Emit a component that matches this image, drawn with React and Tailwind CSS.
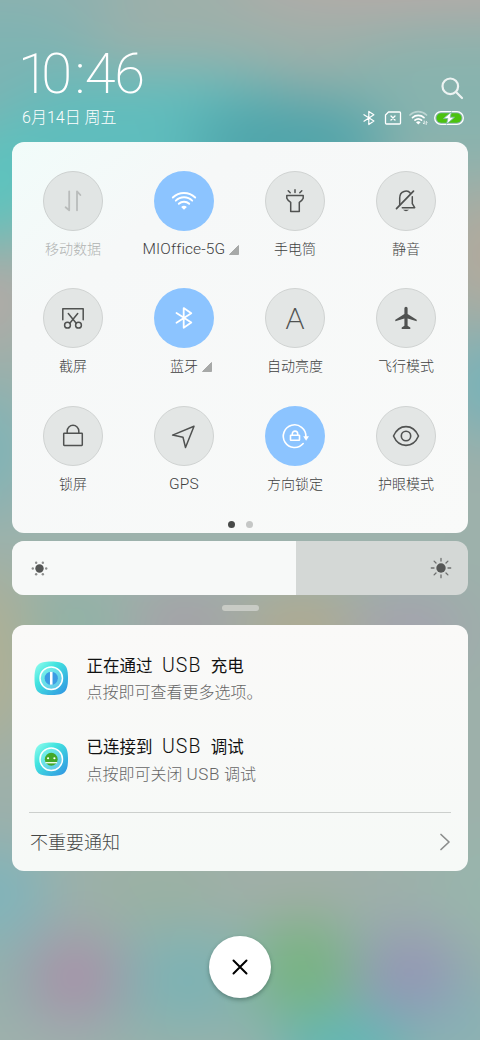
import React from 'react';

const icon = {
  fill: 'none',
  stroke: 'currentColor',
  strokeWidth: 1.5,
  strokeLinecap: 'round',
  strokeLinejoin: 'round'
};

// cx, cy, rx, ry, colour
const blobs = [
  [0, -10, 130, 60, '#8fb1af'],
  [430, -20, 200, 34, '#b8aaa7'],
  [0, 90, 110, 80, '#7db4b3'],
  [470, 100, 140, 70, '#88b3ae'],
  [170, 145, 180, 75, '#5fbdbd'],
  [290, 145, 100, 50, '#4fa4aa'],
  [-10, 190, 50, 60, '#5cc4be'],
  [-20, 295, 50, 45, '#b5a9a5'],
  [500, 255, 60, 60, '#b2a99c'],
  [500, 385, 60, 50, '#76b2b9'],
  [-20, 450, 55, 60, '#7fb4b7'],
  [240, 535, 300, 20, '#9cb4ae'],
  [-15, 660, 45, 90, '#b0b094'],
  [75, 622, 45, 22, '#86b4a2'],
  [185, 625, 50, 24, '#aa99a5'],
  [300, 625, 55, 26, '#b8a785'],
  [410, 630, 55, 24, '#a99bb0'],
  [-10, 895, 60, 50, '#7fb4bb'],
  [490, 890, 60, 60, '#98b5ac'],
  [170, 890, 80, 25, '#9ab1a0'],
  [290, 890, 80, 20, '#a6ada6'],
  [240, 985, 260, 60, '#8bb3ae'],
  [75, 978, 48, 42, '#aa8fa8'],
  [185, 978, 44, 34, '#78b2b6'],
  [303, 968, 46, 50, '#76b37d'],
  [410, 975, 48, 42, '#9593b6'],
  [345, 1050, 70, 36, '#5cb8b7'],
  [470, 1030, 50, 40, '#86b2b6'],
  [30, 1050, 90, 20, '#a2b1ae']
];

function Wallpaper() {
  return (
    <svg className="absolute inset-0" width="480" height="1040" viewBox="0 0 480 1040">
      <defs>
        <filter id="soften" x="-200" y="-200" width="880" height="1440" filterUnits="userSpaceOnUse" colorInterpolationFilters="sRGB">
          <feGaussianBlur stdDeviation="29" />
        </filter>
      </defs>
      <g filter="url(#soften)">
        <rect x="-150" y="-150" width="780" height="1340" fill="#9db0aa" />
        {blobs.map(([cx, cy, rx, ry, fill]) => (
          <ellipse key={`${cx}-${cy}`} cx={cx} cy={cy} rx={rx} ry={ry} fill={fill} />
        ))}
      </g>
    </svg>
  );
}

function DataIcon() {
  return (
    <svg width="30" height="30" viewBox="0 0 30 30" {...icon} strokeWidth="1.8">
      <path d="M11.2 5.3V24.3L7.6 21.3M19 24.3V5.3L22.4 9" />
    </svg>
  );
}

function WifiIcon() {
  return (
    <svg width="30" height="30" viewBox="0 0 30 30" {...icon} strokeWidth="1.9">
      <path d="M3.8 11.5A16 16 0 0 1 26.2 11.5M6.8 14.7A11.6 11.6 0 0 1 23.2 14.7M9.8 17.8A7.5 7.5 0 0 1 20.2 17.8" />
      <path d="M12.1 20.9Q15 18.7 17.9 20.9L15 23.7Z" fill="currentColor" stroke="none" />
    </svg>
  );
}

function TorchIcon() {
  return (
    <svg width="30" height="30" viewBox="0 0 30 30" {...icon}>
      <path d="M6.8 9.5H23.2V12.3Q22.5 14.3 19.3 16.3V25.5H10.7V16.3Q7.5 14.3 6.8 12.3Z" />
      <path d="M15 3.8V6.5M8.2 4.7L10.2 6.7M21.8 4.7L19.8 6.7" />
    </svg>
  );
}

function MuteIcon() {
  return (
    <svg width="30" height="30" viewBox="0 0 30 30" {...icon}>
      <path d="M8.7 18.7V12C8.7 4.5 16.6 3.6 19.4 7.2M21.3 10.7V17.7L23.7 21.7H11.3" />
      <path d="M5.5 22.7L22.5 5.2" strokeWidth="1.7" />
      <path d="M12 23.8H18Q15 26.7 12 23.8Z" fill="currentColor" stroke="none" />
    </svg>
  );
}

function ScissorsIcon() {
  return (
    <svg width="30" height="30" viewBox="0 0 30 30" {...icon}>
      <path d="M4.8 16.8V5.8H25.2V16.8" />
      <path d="M10.3 10.5L18.2 20.2M19.7 10.5L11.8 20.2" />
      <circle cx="9.5" cy="22.2" r="2.9" />
      <circle cx="20.5" cy="22.2" r="2.9" />
    </svg>
  );
}

function BluetoothIcon({ className = 'size-[30px]' }) {
  return (
    <svg className={className} viewBox="0 0 30 30" {...icon} strokeWidth="1.8">
      <path d="M7.5 10L22.3 19.6L14.7 24.8V5.1L22.3 10.3L7.5 19.8" />
    </svg>
  );
}

function PlaneIcon() {
  return (
    <svg width="30" height="30" viewBox="0 0 30 30" fill="currentColor">
      <path d="M13.4 5.3Q13.4 3.7 15 3.7T16.6 5.3V11L25.7 16.7V18.2L16.6 15.6V22.8L19.3 24.6V26H10.7V24.6L13.4 22.8V15.6L4.3 18.2V16.7L13.4 11Z" />
    </svg>
  );
}

function LockIcon() {
  return (
    <svg width="30" height="30" viewBox="0 0 30 30" {...icon}>
      <rect x="5.7" y="12.2" width="18.6" height="12.2" rx="0.6" />
      <path d="M9.2 12.2V10.1A5.8 5.8 0 0 1 20.8 10.1V12.2" />
    </svg>
  );
}

function GpsIcon() {
  return (
    <svg width="30" height="30" viewBox="0 0 30 30" {...icon}>
      <path d="M25 5.3L3.6 14.1L14 16.2L16.5 26.5Z" />
    </svg>
  );
}

function RotationLockIcon() {
  return (
    <svg width="30" height="30" viewBox="0 0 30 30" {...icon} strokeWidth="1.6">
      <path d="M23.2 22.5A11.3 11.3 0 1 1 25.9 15.5" />
      <path d="M23.2 15.3H29L26.1 19.8Z" fill="currentColor" stroke="none" />
      <rect x="10.5" y="14.2" width="9" height="5" rx="0.4" />
      <path d="M12.3 14V12.8A2.7 2.7 0 0 1 17.7 12.8V14" />
    </svg>
  );
}

function EyeIcon() {
  return (
    <svg width="30" height="30" viewBox="0 0 30 30" {...icon} strokeWidth="1.6">
      <path d="M2.5 15C5.5 8.2 10 5.6 15 5.6S24.5 8.2 27.5 15C24.5 21.8 20 24.4 15 24.4S5.5 21.8 2.5 15Z" />
      <circle cx="15" cy="15" r="4.7" />
    </svg>
  );
}

const tiles = [
  { label: '移动数据', icon: <DataIcon />, disabled: true },
  { label: 'MIOffice-5G', icon: <WifiIcon />, active: true, more: true, latin: true },
  { label: '手电筒', icon: <TorchIcon /> },
  { label: '静音', icon: <MuteIcon /> },
  { label: '截屏', icon: <ScissorsIcon /> },
  { label: '蓝牙', icon: <BluetoothIcon />, active: true, more: true },
  { label: '自动亮度', icon: <span className="font-['Lato'] text-[29px] leading-none font-light pb-[2px]">A</span> },
  { label: '飞行模式', icon: <PlaneIcon /> },
  { label: '锁屏', icon: <LockIcon /> },
  { label: 'GPS', icon: <GpsIcon />, latin: true },
  { label: '方向锁定', icon: <RotationLockIcon />, active: true },
  { label: '护眼模式', icon: <EyeIcon /> }
];

function Tile({ tile }) {
  let circle = 'bg-[#e3e6e5] border border-[#d0d3d2] text-[#505251]';
  if (tile.active) circle = 'bg-[#8cc4ff] text-white';
  if (tile.disabled) circle = 'bg-[#e1e5e4] border border-[#cdd1d0] text-[#b9bcbb]';

  return (
    <div className="flex flex-col items-center h-[117.3px]">
      <div className={`size-[60px] rounded-full flex items-center justify-center ${circle}`}>
        {tile.icon}
      </div>
      <div className={`relative mt-2 h-5 leading-5 whitespace-nowrap ${tile.latin ? 'text-[15.5px] tracking-[0.1px]' : 'text-[14px]'} ${tile.disabled ? 'text-[#b0b3b2]' : 'text-[#3e403f]'}`}>
        {tile.label}
        {tile.more && (
          <svg className="absolute left-full top-[6px] ml-[4px]" width="10" height="10" viewBox="0 0 10 10">
            <path d="M9.5 0.5V9.5H0.5Z" fill="#a7a9a8" stroke="#a7a9a8" strokeLinejoin="round" />
          </svg>
        )}
      </div>
    </div>
  );
}

function StatusIcons() {
  return (
    <div className="flex items-center text-white">
      <BluetoothIcon className="size-[20px] mr-[5px]" />
      <svg className="mr-[7px]" width="18" height="14" viewBox="0 0 18 14" {...icon} strokeWidth="1.3">
        <path d="M4.5 1H15.5Q16.5 1 16.5 2V12Q16.5 13 15.5 13H2.5Q1.5 13 1.5 12V4Z" />
        <path d="M7 5L11 9M11 5L7 9" />
      </svg>
      <svg className="mr-[6px]" width="19" height="16" viewBox="0 0 19 16" {...icon} strokeWidth="1.7">
        <path d="M1 5A12 12 0 0 1 17.5 5" opacity="0.45" />
        <path d="M3.5 7.6A8.5 8.5 0 0 1 15 7.6M6 10.2A5 5 0 0 1 12.5 10.2" />
        <path d="M7 12.2Q9.3 10.4 11.6 12.2L9.3 14.5Z" fill="currentColor" stroke="none" />
        <path d="M15.2 11V14L14.2 13.2M17.2 14.5V11.5L18.2 12.3" strokeWidth="0.8" />
      </svg>
      <svg width="30" height="14" viewBox="0 0 30 14">
        <rect x="0.7" y="0.7" width="28.6" height="12.6" rx="6.3" fill="none" stroke="#fff" strokeWidth="1.3" />
        <rect x="2.5" y="2.3" width="25" height="9.4" rx="4.7" fill="#4bc20f" />
        <path d="M17.5 0.8L9.5 7.6H13.8L12.5 13.2L20.5 6.2H16.2Z" fill="#fff" stroke="#7fb9a5" strokeWidth="0.9" />
      </svg>
    </div>
  );
}

function UsbIcon({ debug }) {
  const id = debug ? 'debug' : 'charge';
  return (
    <svg width="34.5" height="34.5" viewBox="0 0 35 35" className="shrink-0">
      <defs>
        <linearGradient id={id} x1="0" y1="0" x2="1" y2="1">
          <stop offset="0" stopColor="#9cfff0" />
          <stop offset="0.35" stopColor="#43e5df" />
          <stop offset="1" stopColor="#2f8fe3" />
        </linearGradient>
      </defs>
      <path d="M17.5 0.5C31 0.5 34.5 4 34.5 17.5S31 34.5 17.5 34.5S0.5 31 0.5 17.5S4 0.5 17.5 0.5Z" fill={`url(#${id})`} />
      <circle cx="17.5" cy="17.5" r="11.4" fill="#b6f4fa" fillOpacity="0.35" stroke="#fff" strokeWidth="1.5" />
      {debug ? (
        <>
          <circle cx="17.5" cy="17.5" r="6.5" fill="#43a829" />
          <circle cx="14.3" cy="16.5" r="1.1" fill="#fff" />
          <circle cx="20.7" cy="16.5" r="1.1" fill="#fff" />
          <path d="M11.5 21H23.5" stroke="#e9fbea" strokeWidth="1.4" />
        </>
      ) : (
        <>
          <circle cx="17.5" cy="17.5" r="6.7" fill="#3b9ce3" />
          <path d="M17.5 11V24" stroke="#fff" strokeWidth="2.6" />
        </>
      )}
    </svg>
  );
}

function Notification({ debug, title, children }) {
  return (
    <div className="flex items-center h-[81.5px] gap-[18px]">
      <UsbIcon debug={debug} />
      <div className="pt-[3px]">
        <div className="flex items-center gap-[9.5px] text-[16.5px] leading-[26px] text-[#111] font-normal">
          {title.map((part) => (
            <span key={part} className={part === 'USB' ? 'text-[19.5px] tracking-[1px] font-light' : 'pt-px'}>{part}</span>
          ))}
        </div>
        <div className="text-[16px] leading-[26px] text-[#666]">{children}</div>
      </div>
    </div>
  );
}

export default function App() {
  return (
    <div className="relative w-[480px] h-[1040px] overflow-hidden font-['Roboto','Noto_Sans_CJK_SC',sans-serif] font-light bg-[#9db0aa]">
      <Wallpaper />
      <div className="relative h-full flex flex-col">
        <header className="h-[142px] shrink-0 pl-[22px] pt-[44px] pr-4 text-white">
          <div className="flex justify-between items-end h-[60px]">
            <div className="font-extralight text-[56px] leading-[60px] tracking-[-1.5px] -ml-1">
              <span className="tracking-[-7.5px]">1</span>0<span className="ml-1 mr-px">:</span>46
            </div>
            <svg className="mb-[4px]" width="24" height="24" viewBox="0 0 24 24" {...icon} strokeWidth="2.2" opacity="0.85">
              <circle cx="10.3" cy="10.3" r="7.8" />
              <path d="M16 16L22 22" />
            </svg>
          </div>
          <div className="flex justify-between items-center h-[27px]">
            <div className="text-[16px] leading-7">6月14日 周五</div>
            <StatusIcons />
          </div>
        </header>

        <section className="mx-3 h-[391px] shrink-0 rounded-xl bg-linear-to-br from-[#f1fcfa] via-[#f6f8f8] via-25% to-[#f9faf9] pt-[29px]">
          <div className="grid grid-cols-[repeat(4,111px)] ml-[5.4px]">
            {tiles.map((tile) => (
              <Tile key={tile.label} tile={tile} />
            ))}
          </div>
          <div className="flex justify-center gap-[11px] mt-[-2px]">
            <div className="size-[7px] rounded-full bg-[#484a49]"></div>
            <div className="size-[7px] rounded-full bg-[#c5c7c6]"></div>
          </div>
        </section>

        <section className="mx-3 mt-[8px] h-[54px] shrink-0 rounded-xl overflow-hidden flex bg-[#d4d8d6] text-[#555756]">
          <div className="w-[284px] bg-[#f7f9f8] flex items-center pl-[18.5px]">
            <svg width="17" height="17" viewBox="0 0 17 17" fill="currentColor">
              <circle cx="8.5" cy="8.5" r="4.2" />
              <g opacity="0.65">
                <circle cx="1.8" cy="8.5" r="1.2" />
                <circle cx="15.2" cy="8.5" r="1.2" />
                <circle cx="5.15" cy="2.7" r="1.2" />
                <circle cx="11.85" cy="2.7" r="1.2" />
                <circle cx="5.15" cy="14.3" r="1.2" />
                <circle cx="11.85" cy="14.3" r="1.2" />
              </g>
            </svg>
          </div>
          <div className="flex-1 flex items-center justify-end pr-4">
            <svg width="22" height="22" viewBox="0 0 22 22" stroke="currentColor" strokeWidth="1.3" strokeLinecap="round">
              <circle cx="11" cy="11" r="4.7" fill="currentColor" stroke="none" />
              <path opacity="0.8" d="M11 1.3V4M11 18V20.7M1.3 11H4M18 11H20.7M4.1 4.1L6 6M16 16L17.9 17.9M4.1 17.9L6 16M16 6L17.9 4.1" />
            </svg>
          </div>
        </section>

        <div className="h-[30px] shrink-0 flex justify-center pt-[10px]">
          <div className="w-[37px] h-[6px] rounded-[3px] bg-[#c8cbc5]"></div>
        </div>

        <section className="mx-3 h-[246px] shrink-0 rounded-xl bg-linear-to-b from-[#faf9f8] to-[#f6f9f7] px-[17px]">
          <div className="pt-[12px] pl-[5px] h-[187px]">
            <Notification title={['正在通过', 'USB', '充电']}>点按即可查看更多选项。</Notification>
            <Notification debug title={['已连接到', 'USB', '调试']}>
              点按即可关闭 <span className="text-[17px] tracking-[0.7px]">USB</span> 调试
            </Notification>
          </div>
          <div className="border-t border-[#cccfcd] h-[59px] flex items-center justify-between text-[#454746] text-[18px] pl-px">
            不重要通知
            <svg width="12" height="18" viewBox="0 0 12 18" {...icon} stroke="#8b8d8c" strokeWidth="1.7">
              <path d="M2 1.5L10 9L2 16.5" />
            </svg>
          </div>
        </section>

        <div className="flex justify-center pt-[65px]">
          <button className="size-[62px] rounded-full bg-white flex items-center justify-center shadow-[0_2px_4px_rgba(40,70,65,0.45)]">
            <svg width="16" height="16" viewBox="0 0 16 16" {...icon} stroke="#000" strokeWidth="2">
              <path d="M1.5 1.5L14.5 14.5M14.5 1.5L1.5 14.5" />
            </svg>
          </button>
        </div>
      </div>
    </div>
  );
}
